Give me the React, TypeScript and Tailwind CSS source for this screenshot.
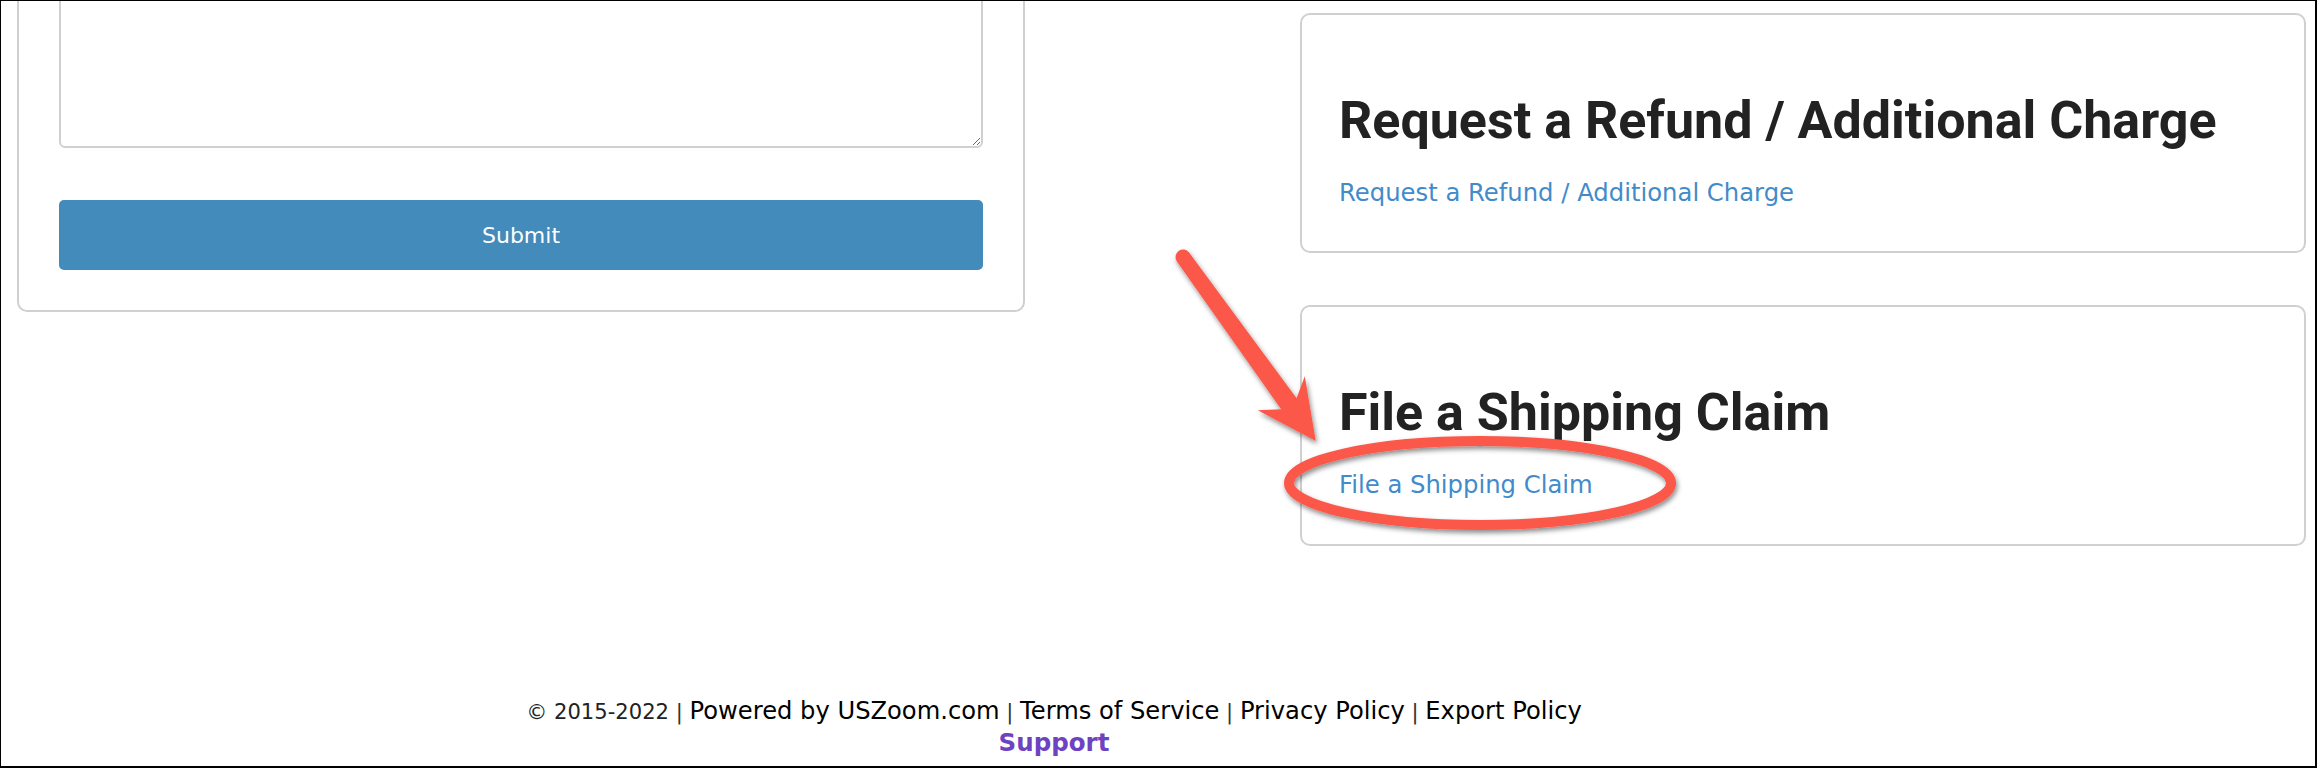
import React from "react";

function ActionCard({ title, link }: { title: string; link: string }) {
  return (
    <div className="rounded-[10px] border-2 border-[#d0d0d0] bg-white pl-[37px] pr-[30px] pt-[80px] pb-[46px]">
      <h2 className="font-['Roboto',sans-serif] text-[52px] font-bold leading-none text-[#222222]">{title}</h2>
      <a href="#" className="mt-[34px] block text-[24.3px] leading-none text-[#428bca]">
        {link}
      </a>
    </div>
  );
}

function Annotation() {
  return (
    <svg className="pointer-events-none absolute left-0 top-0" width="2317" height="768" viewBox="0 0 2317 768">
      <defs>
        <filter id="shadow" x="-20%" y="-20%" width="140%" height="140%">
          <feDropShadow dx="1.5" dy="3" stdDeviation="2.5" floodColor="#000000" floodOpacity="0.45" />
        </filter>
      </defs>
      <g filter="url(#shadow)">
        <g transform="translate(1182 256) rotate(54.2)">
          <path
            d="M 0 -7.5 L 181 -9.5 L 168 -29 L 227 0 L 168 29 L 181 9.5 L 0 7.5 A 7.5 7.5 0 0 1 0 -7.5 Z"
            fill="#fb584a"
          />
        </g>
        <ellipse cx="1479" cy="482" rx="191" ry="42" fill="none" stroke="#fb584a" strokeWidth="10" />
      </g>
    </svg>
  );
}

export default function App() {
  return (
    <div className="relative h-[768px] w-[2317px] overflow-hidden border-b-2 border-l border-r-2 border-t border-black bg-white font-['DejaVu_Sans',Verdana,sans-serif] text-[#222222]">
      <div className="flex items-start">
        <div className="ml-[16px] mt-[-58px] w-[1008px] shrink-0 rounded-[10px] border-2 border-[#d0d0d0] bg-white px-[40px] pb-[40px] pt-[20px]">
          <textarea className="block h-[183px] w-full resize-y rounded-[6px] border-2 border-[#d0d0d0] bg-white" />
          <button className="mt-[52px] block h-[70px] w-full rounded-[5px] bg-[#428bba] text-[22px] text-white">
            Submit
          </button>
        </div>
        <div className="ml-[275px] mt-[12px] flex w-[1006px] shrink-0 flex-col gap-[52px]">
          <ActionCard title="Request a Refund / Additional Charge" link="Request a Refund / Additional Charge" />
          <ActionCard title="File a Shipping Claim" link="File a Shipping Claim" />
        </div>
      </div>
      <footer className="mt-[149px] w-[2106px] text-center">
        <div className="text-[24.2px] leading-[33px] text-black">
          <span className="text-[21.1px] text-[#222222]">© 2015-2022</span>
          <span className="text-[21.1px] text-[#333333]"> | </span>
          <a href="#">Powered by USZoom.com</a>
          <span className="text-[21.1px] text-[#333333]"> | </span>
          <a href="#">Terms of Service</a>
          <span className="text-[21.1px] text-[#333333]"> | </span>
          <a href="#">Privacy Policy</a>
          <span className="text-[21.1px] text-[#333333]"> | </span>
          <a href="#">Export Policy</a>
        </div>
        <div className="text-[24.5px] font-bold leading-[30px]">
          <a href="#" className="text-[#6f42c1]">
            Support
          </a>
        </div>
      </footer>
      <Annotation />
    </div>
  );
}
